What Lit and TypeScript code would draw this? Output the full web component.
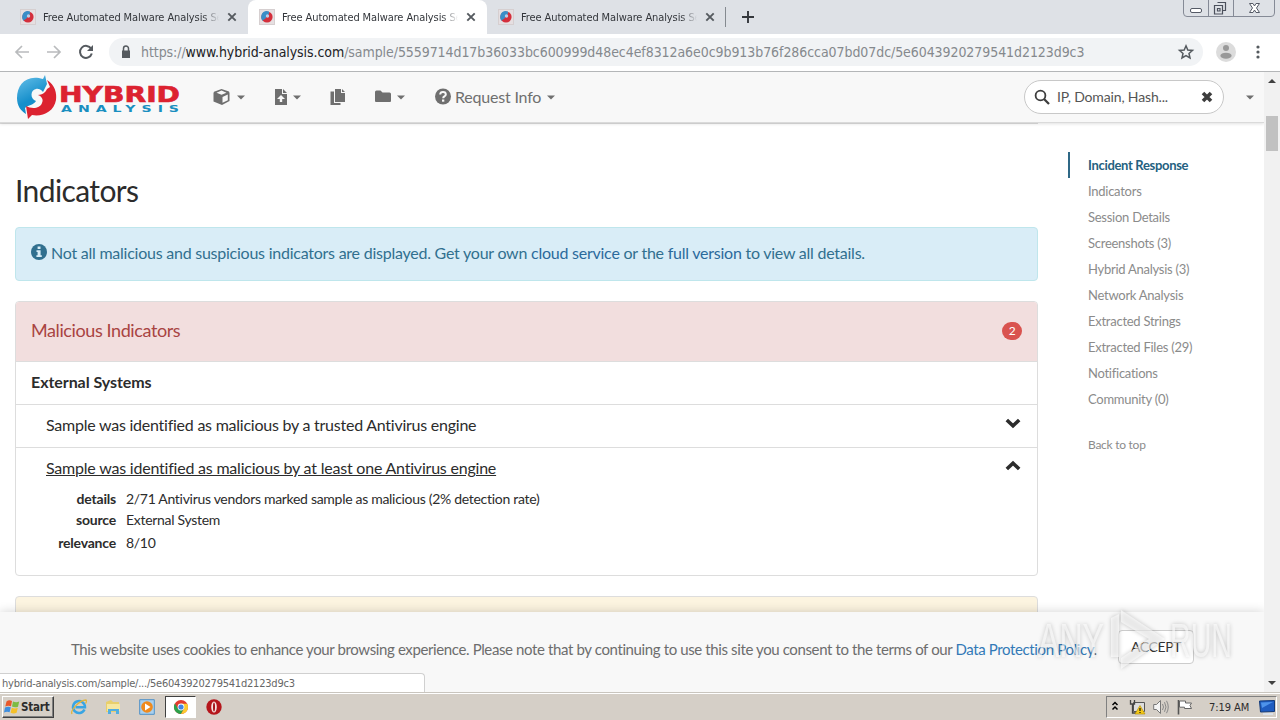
import {css, html, LitElement, svg} from "lit";
import {customElement, property} from "lit/decorators.js";
import {classMap} from "lit/directives/class-map.js";

const sections = [
  "Incident Response",
  "Indicators",
  "Session Details",
  "Screenshots (3)",
  "Hybrid Analysis (3)",
  "Network Analysis",
  "Extracted Strings",
  "Extracted Files (29)",
  "Notifications",
  "Community (0)",
];

const details = [
  ["details", "2/71 Antivirus vendors marked sample as malicious (2% detection rate)"],
  ["source", "External System"],
  ["relevance", "8/10"],
];

const swirl = svg`
  <defs>
    <linearGradient id="blue" x1="0" y1="0" x2="0.4" y2="1">
      <stop offset="0.1" stop-color="#5fbbe6"/>
      <stop offset="0.7" stop-color="#168fcb"/>
    </linearGradient>
  </defs>
  <path d="M29 0 L27 4 C10 -1 1 10 1 23 C1 31 5 36 10 39 L9 33 C12 30 18 30 20 26 C14 24 14 15 20 14 C24 13 27 17 27 17 L31 9Z" fill="url(#blue)"/>
  <path d="M31 5 C39 10 41 18 40 25 C38 37 26 42 16 40 L12 44 L10 31 C15 34 24 34 26 28 C28 24 25 21 22 20 C26 20 30 17 31 14 L34 12Z" fill="#dc2230"/>
`;

@customElement("ha-icon")
export class IconElement extends LitElement {
  @property() public name = "";

  private shapes: Record<string, unknown> = {
    cube: svg`<path fill-rule="evenodd" d="M8.500 0 L16 2.500 L16.500 4 V12 L9 16 L.5 12.500 V4 L1 2.800Z M8.500 1.600 L3.500 3.700 L8.500 5.800 L13.500 3.700Z M9.500 8 V13.700 L14.800 11.300 V5.500Z"/>`,
    file: svg`<path d="M2 0 H9 V5 H14 V16 H2Z M10 0 L14 4 H10Z"/><path d="M8 6 L12 10 H9.200 V13 H6.800 V10 H4Z" fill="#f8f8f8"/>`,
    copy: svg`<path d="M5 0 H11 V4 H15 V13 H5Z M12 0 L15 3 H12Z M.500 2.500 H4 V14 H10.500 V16 H.500Z"/>`,
    folder: svg`<path d="M0 3 Q0 1.500 1.500 1.500 H5.5 L7.5 3.500 H14.5 Q16 3.500 16 5 V12 Q16 13 15 13 H1 Q0 13 0 12Z"/>`,
    help: svg`<circle cx="8" cy="7.500" r="8"/><path d="M5.200 5.500 Q5.300 3.100 8 3.100 Q10.800 3.100 10.800 5.500 Q10.800 6.600 9.300 7.500 Q8.200 8.100 8.200 9.200" fill="none" stroke="#f8f8f8" stroke-width="2"/><path d="M7 10.500 H9.300 V12.700 H7Z" fill="#f8f8f8"/>`,
    info: svg`<circle cx="8" cy="8" r="8"/><path d="M6.6 2.6 H9.5 V5 H6.6Z M5.5 6.2 H9.6 V11.2 H10.8 V13 H5.4 V11.2 H6.6 V8 H5.5Z" fill="#d9edf7"/>`,
    search: svg`<circle cx="6.5" cy="6.5" r="4.9" fill="none" stroke="currentColor" stroke-width="1.8"/><path d="M10 10 L15 15" stroke="currentColor" stroke-width="2.3"/>`,
    remove: svg`<path d="M4 4 L12 12 M12 4 L4 12" stroke="currentColor" stroke-width="3.6"/>`,
    down: svg`<path d="M1.8 5 L8 10.8 L14.2 5" fill="none" stroke="currentColor" stroke-width="3.6"/>`,
    up: svg`<path d="M1.8 11 L8 5.2 L14.2 11" fill="none" stroke="currentColor" stroke-width="3.6"/>`,
    caret: svg`<path d="M4 6.500 H12 L8 10.500Z"/>`,
    close: svg`<path d="M4.3 4.3 L11.7 11.7 M11.7 4.3 L4.3 11.7" stroke="currentColor" stroke-width="1.9"/>`,
    plus: svg`<path d="M8 2 V14 M2 8 H14" stroke="currentColor" stroke-width="1.9"/>`,
    back: svg`<path d="M15 8 H2 M8 2 L2 8 L8 14" fill="none" stroke="currentColor" stroke-width="1.7"/>`,
    forward: svg`<path d="M1 8 H14 M8 2 L14 8 L8 14" fill="none" stroke="currentColor" stroke-width="1.7"/>`,
    reload: svg`<path d="M13.2 4.8 A6 6 0 1 0 13.8 9.5" fill="none" stroke="currentColor" stroke-width="2"/><path d="M15 1 V7 H9Z"/>`,
    lock: svg`<path d="M4 6.5 H12 V14 H4Z"/><path d="M5.5 7 V4.6 A2.5 2.5 0 0 1 10.5 4.6 V7" fill="none" stroke="currentColor" stroke-width="1.5"/>`,
    star: svg`<path d="M8 1.8 L9.8 6 L14.5 6.4 L11 9.5 L12 14 L8 11.6 L4 14 L5 9.5 L1.5 6.4 L6.2 6Z" fill="none" stroke="currentColor" stroke-width="1.5"/>`,
    more: svg`<circle cx="8" cy="3" r="1.6"/><circle cx="8" cy="8" r="1.6"/><circle cx="8" cy="13" r="1.6"/>`,
    favicon: svg`<path d="M0 0 H16 V16 H0Z" fill="#d6cfd0"/><path d="M1 1 H15 V15 H1Z" fill="#e6dfe1"/><circle cx="8" cy="8" r="5.6" fill="#d42f3c"/><path d="M10 2.500 C4 0 0 7 3.500 12 C4.500 10 7.500 10 7 8 C8 6 10 6 10 4Z" fill="#3a8ec8"/><circle cx="8.500" cy="7" r="1.7" fill="#b9cde8"/>`,
    ie: svg`<path d="M13.5 10.5 A6 6 0 1 1 14 8.3 H4.5" fill="none" stroke="#39a5e3" stroke-width="2.5"/><path d="M1 15 C-1 12 8 1 15 1 C16 2 15 4 14.5 4.5" fill="none" stroke="#e2b53b" stroke-width="1.3"/>`,
    explorer: svg`<path d="M1 3 L6 1 L8 3 H14 V13 H1Z" fill="#e8cf6c"/><path d="M2 5 H15 V12 H2Z" fill="#f6e7a0"/><path d="M3 10 H14 V15 H11 V12 H6 V15 H3Z" fill="#52aee0"/>`,
    player: svg`<path d="M.7 .7 H15.3 V15.3 H.7Z" fill="#a9d0ee" stroke="#4f91c7"/><circle cx="8" cy="8" r="5.8" fill="#ef8a1d"/><path d="M6 4.5 L11.5 8 L6 11.5Z" fill="#fff"/>`,
    chrome: svg`<circle cx="8" cy="8" r="7" fill="#e33b2e"/><path d="M1.9 4.5 A7 7 0 0 0 8 15 L11 9.5 L5 9.7Z" fill="#2ba14b"/><path d="M8 15 A7 7 0 0 0 14.2 4.8 H8 L11.2 9.5Z" fill="#fccb2f"/><circle cx="8" cy="8" r="3.4" fill="#fff"/><circle cx="8" cy="8" r="2.6" fill="#4184e4"/>`,
    opera: svg`<circle cx="8" cy="8" r="7.7" fill="#b5161c"/><ellipse cx="8" cy="8" rx="2.800" ry="5.600" fill="#f6e5e3"/><ellipse cx="8" cy="8" rx="1" ry="4.600" fill="#a51218"/>`,
    hidden: svg`<path d="M5.500 6 L8 3.500 L10.500 6 M5.500 10.500 L8 8 L10.500 10.500" fill="none" stroke="#000" stroke-width="1.5"/>`,
    network: svg`<path d="M4.5 3.5 H15.5 V12.5 H4.5Z" fill="#ddd" stroke="#555"/><path d="M1.5 1 V5 H5.5 V1 M3.5 5 V14 H7" fill="none" stroke="#444" stroke-width="1.3"/><path d="M11 6.5 L16 15 H6Z" fill="#f4c817" stroke="#b08a00" stroke-width=".6"/><path d="M11 9 V12 M11 13 V14" stroke="#111" stroke-width="1.2"/>`,
    sound: svg`<path d="M.7 5.5 H3.5 L7.5 1.5 V14.5 L3.5 10.5 H.7Z" fill="#f4f4f4" stroke="#777"/><path d="M9.5 5 Q11.5 8 9.5 11 M11.5 3.2 Q14.5 8 11.5 12.8 M13.5 1.8 Q17 8 13.5 14.2" fill="none" stroke="#888"/>`,
    flag: svg`<path d="M1.5 1 V15.5" stroke="#555" stroke-width="1.6"/><path d="M2.5 2 H8.5 V4 H14.5 L13 6.5 L14.5 9.5 H7.5 V8.2 H2.5Z" fill="#fff" stroke="#666"/>`,
    desktop: svg`<path d="M.5 2 L15.5 1.5 V12.5 L1.5 13Z" fill="#1f5cc0" stroke="#123a7a"/><path d="M2 3.5 L14 3 L3 9Z" fill="#4e93ea"/><path d="M4 15 H14" stroke="#dfe9f7" stroke-width="1.4"/>`,
    windows: svg`<path d="M2.5 2.5 Q5 .5 8 2 L7 7.2 Q4 6.2 1.3 7.6Z" fill="#e8582b"/><path d="M9 2.4 Q12 4 15.2 2.5 L14 7.8 Q11 9 8 7.6Z" fill="#7dbb42"/><path d="M1 8.6 Q4 7.2 6.8 8.3 L5.6 13.3 Q3 12.2 0 13.5Z" fill="#3f8ede"/><path d="M7.8 8.7 Q10.7 10 13.8 8.8 L12.6 13.8 Q9.8 15.2 6.6 13.8Z" fill="#f5c029"/>`,
  };

  protected render(): unknown {
    return html`<svg viewBox="0 0 16 16" fill="currentColor">${this.shapes[this.name]}</svg>`;
  }

  static styles = css`
    :host {
      display: block;
      flex: none;
      width: 16px;
      height: 16px;
    }

    svg {
      display: block;
      width: 100%;
      height: 100%;
      overflow: visible;
    }
  `;
}

@customElement("browser-chrome")
export class BrowserChromeElement extends LitElement {
  protected render(): unknown {
    return html`
      <div class="tabs">
        ${[0, 1, 2].map((i) => html`
          <div class=${classMap({tab: true, active: i === 1})}>
            <ha-icon name="favicon"></ha-icon>
            <span class="title">Free Automated Malware Analysis Service</span>
            <ha-icon name="close"></ha-icon>
          </div>
        `)}
        <div class="divider"></div>
        <ha-icon class="plus" name="plus"></ha-icon>
        <svg class="controls" viewBox="0 0 92 17">
          <path d="M.5 0 V13 Q.5 16.5 4 16.5 H88 Q91.5 16.5 91.5 13 V0 M25.5 0 V16 M50.5 0 V16" fill="none" stroke="#858a96"/>
          <rect x="7.500" y="8.500" width="11" height="4" rx="1.500" fill="#fff" stroke="#555a66"/>
          <path d="M34.500 2.500 H42.500 V10.500 H40 M31.500 5.500 H39.500 V14 H31.500Z M34.500 8.500 H37 V11 H34.500Z" fill="none" stroke="#4c515d" stroke-width="1.200"/>
          <path d="M66.500 3.500 H70 L71.500 6 L73 3.500 H76.500 L73.500 8 L76.500 12.500 H73 L71.500 10 L70 12.500 H66.500 L69.500 8Z" fill="#fff" stroke="#555a66"/>
        </svg>
      </div>
      <div class="toolbar">
        <ha-icon class="off" name="back"></ha-icon>
        <ha-icon class="off" name="forward"></ha-icon>
        <ha-icon name="reload"></ha-icon>
        <div class="omnibox">
          <ha-icon name="lock"></ha-icon>
          <span class="url">https://<b>www.hybrid-analysis.com</b>/sample/5559714d17b36033bc600999d48ec4ef8312a6e0c9b913b76f286cca07bd07dc/5e6043920279541d2123d9c3</span>
          <ha-icon name="star"></ha-icon>
        </div>
        <svg class="avatar" viewBox="0 0 20 20">
          <circle cx="10" cy="10" r="10" fill="#dcdcdc"/>
          <circle cx="10" cy="6" r="3" fill="#999"/>
          <ellipse cx="10" cy="13.700" rx="5.600" ry="3" fill="#999"/>
        </svg>
        <ha-icon class="more" name="more"></ha-icon>
      </div>
    `;
  }

  static styles = css`
    :host {
      display: block;
      color: #555a5f;
      font-family: "DejaVu Sans Condensed", "Noto Sans", sans-serif;
    }

    .tabs {
      height: 34px;
      display: flex;
      align-items: center;
      background: #dee1e6;
    }

    .tab {
      box-sizing: border-box;
      width: 239px;
      height: 34px;
      padding: 0 8px 0 11px;
      display: flex;
      align-items: center;
    }

    .tab:first-child {
      width: 248px;
      padding-left: 20px;
    }

    .tab.active {
      border-radius: 8px 8px 0 0;
      background: #fff;
    }

    .title {
      width: 176px;
      margin: 0 auto 0 7px;
      overflow: hidden;
      white-space: nowrap;
      color: #33363b;
      font-size: 11px;
      letter-spacing: -0.1px;
      -webkit-mask-image: linear-gradient(90deg, #000 160px, transparent 176px);
    }

    .divider {
      width: 1px;
      height: 20px;
      margin: 0 14px 0 -1px;
      background: #858a90;
    }

    .plus {
      color: #34373c;
    }

    .controls {
      width: 92px;
      height: 17px;
      margin: 0 5px 0 auto;
      align-self: flex-start;
    }

    .toolbar {
      box-sizing: border-box;
      height: 38px;
      padding: 0 0 2px 14px;
      display: flex;
      align-items: center;
      gap: 16px;
      border-bottom: 1px solid #b4b6b8;
      background: #fff;
    }

    .off {
      color: #b9bbbd;
    }

    .omnibox {
      box-sizing: border-box;
      width: 1094px;
      height: 28px;
      margin-left: -1px;
      padding: 0 9px 0 9px;
      display: flex;
      flex: none;
      align-items: center;
      border-radius: 14px;
      background: #f1f3f5;
    }

    .url {
      flex: 1;
      margin-left: 7px;
      white-space: nowrap;
      color: #85898d;
      font-size: 14px;
      letter-spacing: -0.07px;
    }

    .url b {
      color: #202124;
      font-weight: normal;
    }

    .avatar {
      width: 20px;
      height: 20px;
      flex: none;
      margin-left: -3px;
    }

    .more {
      margin-left: -2px;
    }
  `;
}

@customElement("site-nav")
export class SiteNavElement extends LitElement {
  protected render(): unknown {
    return html`
      <svg class="logo" viewBox="0 0 166 46">
        ${swirl}
        <text x="43" y="27" class="hybrid" textLength="121" lengthAdjust="spacingAndGlyphs">HYBRID</text>
        <text x="45" y="37" class="analysis" textLength="124" lengthAdjust="spacingAndGlyphs">ANALYSIS</text>
      </svg>
      <div class="item cube"><ha-icon name="cube"></ha-icon><ha-icon name="caret"></ha-icon></div>
      <div class="item file"><ha-icon name="file"></ha-icon><ha-icon name="caret"></ha-icon></div>
      <div class="item copy"><ha-icon name="copy"></ha-icon></div>
      <div class="item folder"><ha-icon name="folder"></ha-icon><ha-icon name="caret"></ha-icon></div>
      <div class="item help"><ha-icon name="help"></ha-icon><span>Request Info</span><ha-icon name="caret"></ha-icon></div>
      <div class="search">
        <ha-icon name="search"></ha-icon>
        <span>IP, Domain, Hash...</span>
        <ha-icon name="remove"></ha-icon>
      </div>
      <ha-icon class="more" name="caret"></ha-icon>
    `;
  }

  static styles = css`
    :host {
      box-sizing: border-box;
      height: 51px;
      padding: 0 6px 0 16px;
      display: flex;
      align-items: center;
      flex: none;
      border-bottom: 1px solid #dadada;
      box-shadow: 0 1px 3px rgba(0, 0, 0, 0.12);
      background: #f8f8f8;
      color: #6f6f6f;
      font-size: 16px;
      position: relative;
    }

    .logo {
      width: 166px;
      height: 46px;
      padding-top: 1px;
    }

    .hybrid {
      fill: #dc2230;
      stroke: #dc2230;
      stroke-width: 0.6px;
      font: bold 20.5px "DejaVu Sans", sans-serif;
    }

    .analysis {
      fill: #1a8fc0;
      font: bold 9.5px "DejaVu Sans", sans-serif;
      letter-spacing: 4px;
    }

    .item {
      display: flex;
      align-items: center;
      gap: 4px;
      padding-bottom: 1px;
    }

    .cube {
      margin-left: 31px;
    }

    .file {
      margin-left: 24px;
      gap: 0;
    }

    .copy {
      margin-left: 25px;
    }

    .folder {
      margin-left: 29px;
      gap: 2px;
    }

    .help {
      margin-left: 26px;
    }

    .help span {
      width: 84px;
      white-space: nowrap;
      letter-spacing: -0.2px;
    }

    .search {
      box-sizing: border-box;
      width: 200px;
      height: 34px;
      margin-left: auto;
      padding: 0 8px 1px 9px;
      display: flex;
      align-items: center;
      gap: 7px;
      border: 1px solid #c8c8c8;
      border-radius: 17px;
      background: #fff;
      color: #3d3d3d;
    }

    .search span {
      flex: 1;
      color: #555;
      font-size: 14px;
      letter-spacing: -0.15px;
    }

    .more {
      margin-left: 18px;
    }
  `;
}

@customElement("task-bar")
export class TaskBarElement extends LitElement {
  protected render(): unknown {
    return html`
      <div class="start"><ha-icon name="windows"></ha-icon>Start</div>
      <div class="pins">
        <ha-icon name="ie"></ha-icon>
        <ha-icon name="explorer"></ha-icon>
        <ha-icon name="player"></ha-icon>
        <div class="running"><ha-icon name="chrome"></ha-icon></div>
        <ha-icon name="opera"></ha-icon>
      </div>
      <div class="tray">
        <ha-icon name="hidden"></ha-icon>
        <ha-icon name="network"></ha-icon>
        <ha-icon name="sound"></ha-icon>
        <ha-icon name="flag"></ha-icon>
        <span>7:19 AM</span>
        <ha-icon name="desktop"></ha-icon>
      </div>
    `;
  }

  static styles = css`
    :host {
      box-sizing: border-box;
      height: 28px;
      padding: 1px 3px 0 2px;
      display: flex;
      align-items: center;
      border-top: 1px solid #c9c5be;
      box-shadow: inset 0 1px #fff;
      background: #d5cfc7;
      font: 11px "DejaVu Sans Condensed", "Noto Sans", sans-serif;
    }

    .start {
      box-sizing: border-box;
      width: 52px;
      height: 22px;
      padding-left: 1px;
      display: flex;
      align-items: center;
      gap: 1px;
      border: 1px solid;
      border-color: #fff #404040 #404040 #fff;
      box-shadow: inset -1px -1px #808080;
      font-size: 11.5px;
      font-weight: bold;
      letter-spacing: -0.2px;
    }

    .pins {
      margin-left: 17px;
      display: flex;
      align-items: center;
      gap: 18px;
    }

    .running {
      box-sizing: border-box;
      width: 31px;
      height: 22px;
      margin: 0 -8px;
      padding: 2px 7px;
      border: 1px solid;
      border-color: #404040 #fff #fff #404040;
      background: #fff;
    }

    .tray {
      box-sizing: border-box;
      width: 171px;
      height: 22px;
      margin-left: auto;
      display: flex;
      align-items: center;
      gap: 8px;
      border: 1px solid;
      border-color: #808080 #fff #fff #808080;
    }

    .tray span {
      flex: 1;
      margin-left: 8px;
      white-space: nowrap;
      letter-spacing: -0.05px;
    }

    .tray ha-icon:first-child {
      margin-right: -2px;
    }

    .tray ha-icon:last-child {
      margin-right: 1px;
    }
  `;
}

@customElement("app-root")
export class AppRootElement extends LitElement {
  protected render(): unknown {
    return html`
      <browser-chrome></browser-chrome>
      <div class="viewport">
        <div class="page">
          <site-nav></site-nav>
          <div class="rule"></div>
          <div class="columns">
            <main>
              <h2>Indicators</h2>
              <div class="alert">
                <ha-icon name="info"></ha-icon>
                <span>Not all malicious and suspicious indicators are displayed. Get your own <a>cloud service</a> or the <a>full version</a> to view all details.</span>
              </div>
              <div class="panel">
                <div class="heading"><span>Malicious Indicators</span><span class="badge">2</span></div>
                <div class="row group">External Systems</div>
                <div class="row">
                  <span>Sample was identified as malicious by a trusted Antivirus engine</span>
                  <ha-icon name="down"></ha-icon>
                </div>
                <div class="row">
                  <span class="open">Sample was identified as malicious by at least one Antivirus engine</span>
                  <ha-icon name="up"></ha-icon>
                </div>
                <dl>${details.map(([term, text]) => html`<dt>${term}</dt><dd>${text}</dd>`)}</dl>
              </div>
              <div class="panel warning"></div>
            </main>
            <aside>
              ${sections.map((name, i) => html`<div class=${classMap({link: true, current: i === 0})}>${name}</div>`)}
              <div class="top">Back to top</div>
            </aside>
          </div>
          <div class="cookies">
            <span>This website uses cookies to enhance your browsing experience. Please note that by continuing to use this site you consent to the terms of our <a>Data Protection Policy</a>.</span>
            <div class="accept">ACCEPT</div>
          </div>
          <div class="status">hybrid-analysis.com/sample/.../5e6043920279541d2123d9c3</div>
          <svg class="watermark" viewBox="0 0 200 66">
            <text x="1" y="50" textLength="66" lengthAdjust="spacingAndGlyphs">ANY</text>
            <path d="M74 50 V11 L82 7 V50Z M84 3 L128 32 L84 62 V51 L112 32 L84 15Z"/>
            <text x="133" y="50" textLength="62" lengthAdjust="spacingAndGlyphs">RUN</text>
          </svg>
        </div>
        <div class="scrollbar">
          <svg viewBox="0 0 16 16"><path d="M4 11 L8 7 L12 11Z"/></svg>
          <div class="thumb"></div>
          <svg viewBox="0 0 16 16"><path d="M4 5 H12 L8 9Z"/></svg>
        </div>
      </div>
      <task-bar></task-bar>
    `;
  }

  static styles = css`
    :host {
      width: 1280px;
      height: 720px;
      display: flex;
      flex-direction: column;
      overflow: hidden;
      background: #fff;
      color: #2c2c2c;
      font-family: Lato, "Open Sans", sans-serif;
    }

    .viewport {
      height: 620px;
      display: flex;
    }

    .page {
      width: 1264px;
      position: relative;
      overflow: hidden;
    }

    .rule {
      width: 1038px;
      height: 1px;
      background: #ddd;
    }

    .columns {
      display: flex;
      gap: 30px;
      padding-left: 15px;
    }

    main {
      width: 1023px;
      white-space: nowrap;
    }

    h2 {
      height: 36px;
      margin: 48px 0 19px;
      font-size: 30px;
      font-weight: normal;
      line-height: 36px;
      letter-spacing: -0.6px;
    }

    .alert {
      box-sizing: border-box;
      height: 54px;
      margin-bottom: 20px;
      padding: 0 15px 3px;
      display: flex;
      align-items: center;
      gap: 4px;
      border: 1px solid #bfe6ec;
      border-radius: 4px;
      background: #d9edf7;
      color: #31708f;
      font-size: 16px;
      letter-spacing: -0.24px;
    }

    .alert ha-icon {
      margin-bottom: 1px;
    }

    .alert a {
      color: #2b6a9c;
    }

    .panel {
      box-sizing: border-box;
      height: 275px;
      margin-bottom: 20px;
      border: 1px solid #ddd;
      border-radius: 4px;
      overflow: hidden;
      font-size: 16px;
    }

    .heading {
      box-sizing: border-box;
      height: 59px;
      padding: 0 15px 3px;
      display: flex;
      align-items: center;
      justify-content: space-between;
      background: #f2dede;
      color: #a94442;
      font-size: 18px;
      letter-spacing: -0.4px;
    }

    .badge {
      width: 20px;
      height: 18px;
      margin-top: 2px;
      border-radius: 9px;
      background: #d9534f;
      color: #fff;
      font-size: 12px;
      line-height: 18px;
      text-align: center;
    }

    .row {
      box-sizing: border-box;
      height: 43px;
      padding: 0 16px 3px 30px;
      display: flex;
      align-items: center;
      justify-content: space-between;
      border-top: 1px solid #ddd;
      letter-spacing: -0.24px;
    }

    .group {
      padding-left: 15px;
      font-weight: bold;
      letter-spacing: -0.06px;
    }

    .row ha-icon {
      margin-bottom: 4px;
    }

    .open {
      text-decoration: underline;
      letter-spacing: -0.21px;
    }

    dl {
      margin: -2px 0 0;
      display: grid;
      grid-template-columns: 100px 1fr;
      grid-template-rows: 21px 21px 24px;
      column-gap: 10px;
      align-items: center;
      font-size: 14px;
      letter-spacing: -0.3px;
    }

    dt {
      text-align: right;
      font-weight: bold;
      letter-spacing: -0.2px;
    }

    dd {
      margin: 0;
    }

    .warning {
      height: 60px;
      background: #fcf4e0;
    }

    aside {
      padding-top: 28px;
      color: #8b8b8b;
      font-size: 13px;
      letter-spacing: -0.26px;
    }

    .link {
      height: 26px;
      padding-left: 20px;
      line-height: 26px;
    }

    .current {
      padding-left: 18px;
      border-left: 2px solid #2f6886;
      color: #24617f;
      font-weight: bold;
      letter-spacing: -0.32px;
    }

    .top {
      margin-top: 24px;
      padding-left: 20px;
      font-size: 12px;
      line-height: 18px;
    }

    .cookies {
      box-sizing: border-box;
      width: 100%;
      height: 80px;
      padding: 0 70px 6px 71px;
      position: absolute;
      bottom: 0;
      display: flex;
      align-items: center;
      justify-content: space-between;
      box-shadow: 0 0 10px rgba(0, 0, 0, 0.18);
      background: #f8f8f8;
      color: #6d6d6d;
      font-size: 15px;
      letter-spacing: -0.38px;
      white-space: nowrap;
    }

    .cookies a {
      color: #337ab7;
    }

    .accept {
      box-sizing: border-box;
      width: 76px;
      height: 34px;
      flex: none;
      margin-bottom: 4px;
      border: 1px solid #ccc;
      border-radius: 4px;
      background: #fff;
      color: #333;
      font-size: 14px;
      line-height: 32px;
      text-align: center;
    }

    .status {
      box-sizing: border-box;
      width: 425px;
      height: 19px;
      padding-left: 2px;
      position: absolute;
      bottom: 0;
      left: 0;
      border: 1px solid #d0d0d0;
      border-width: 1px 1px 0 0;
      border-radius: 0 4px 0 0;
      background: #fff;
      color: #666;
      font: 11px/19px "DejaVu Sans Condensed", "Noto Sans", sans-serif;
      letter-spacing: -0.22px;
    }

    .watermark {
      width: 200px;
      height: 66px;
      position: absolute;
      top: 535px;
      left: 1037px;
      fill: rgba(255, 255, 255, 0.6);
      filter: drop-shadow(0 0 2px rgba(0, 0, 0, 0.35));
      font: 48px "Liberation Sans", sans-serif;
    }

    .scrollbar {
      width: 16px;
      display: flex;
      flex-direction: column;
      background: #f1f1f1;
      fill: #404040;
    }

    .scrollbar svg {
      width: 16px;
      height: 16px;
    }

    .thumb {
      width: 12px;
      height: 35px;
      margin: 28px 2px auto;
      background: #c1c1c1;
    }
  `;
}
